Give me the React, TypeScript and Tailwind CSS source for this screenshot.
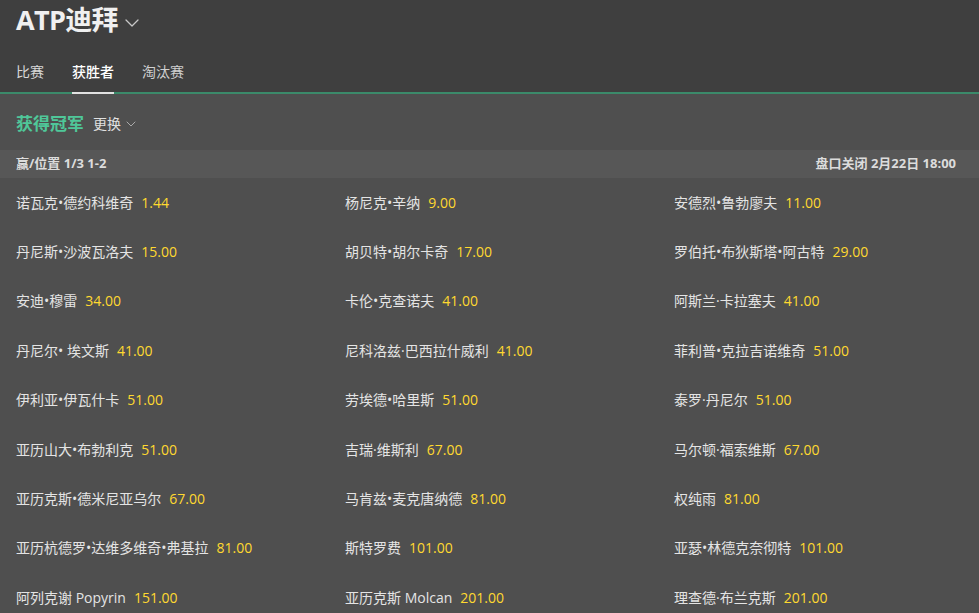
import { ChevronDown } from 'lucide-react';

const runners: [string, string][] = [
    ['诺瓦克•德约科维奇', '1.44'],
    ['杨尼克•辛纳', '9.00'],
    ['安德烈•鲁勃廖夫', '11.00'],
    ['丹尼斯•沙波瓦洛夫', '15.00'],
    ['胡贝特•胡尔卡奇', '17.00'],
    ['罗伯托•布狄斯塔•阿古特', '29.00'],
    ['安迪•穆雷', '34.00'],
    ['卡伦•克查诺夫', '41.00'],
    ['阿斯兰·卡拉塞夫', '41.00'],
    ['丹尼尔• 埃文斯', '41.00'],
    ['尼科洛兹·巴西拉什威利', '41.00'],
    ['菲利普•克拉吉诺维奇', '51.00'],
    ['伊利亚•伊瓦什卡', '51.00'],
    ['劳埃德•哈里斯', '51.00'],
    ['泰罗·丹尼尔', '51.00'],
    ['亚历山大•布勃利克', '51.00'],
    ['吉瑞·维斯利', '67.00'],
    ['马尔顿·福索维斯', '67.00'],
    ['亚历克斯•德米尼亚乌尔', '67.00'],
    ['马肯兹•麦克唐纳德', '81.00'],
    ['权纯雨', '81.00'],
    ['亚历杭德罗•达维多维奇•弗基拉', '81.00'],
    ['斯特罗费', '101.00'],
    ['亚瑟•林德克奈彻特', '101.00'],
    ['阿列克谢 Popyrin', '151.00'],
    ['亚历克斯 Molcan', '201.00'],
    ['理查德·布兰克斯', '201.00'],
];

export default function App() {
    return (
        <div
            className="min-h-screen bg-[#4f4f4f] text-[#e4e4e4]"
            style={{ fontFamily: '"Open Sans", "Noto Sans CJK SC", sans-serif' }}
        >
            <header className="bg-[#3f3f3f]">
                <div className="flex items-center h-[41px] px-4">
                    <h1 className="text-[27px] font-bold text-[#f0f0f0] tracking-tight">ATP迪拜</h1>
                    <ChevronDown className="ml-0.5 mt-1 w-6 h-6 text-[#c8c8c8]" strokeWidth={1.25} />
                </div>
                <nav className="flex px-4 pt-[21px] border-b-2 border-[#3b8a6a]">
                    <a className="mr-7 pb-[10px] text-sm text-[#d8d8d8]">比赛</a>
                    <a className="mr-7 pb-[10px] text-sm text-white -mb-[2px] border-b-2 border-[#e2e2e2] font-medium">获胜者</a>
                    <a className="pb-[10px] text-sm text-[#d0d0d0]">淘汰赛</a>
                </nav>
            </header>

            <div className="flex items-center h-[56px] pt-[4px] px-4">
                <span className="text-[17px] font-bold text-[#4fc799]">获得冠军</span>
                <span className="ml-[9px] text-sm text-[#e0e0e0]">更换</span>
                <ChevronDown className="ml-0.5 w-4 h-4 text-[#aaaaaa]" strokeWidth={1.5} />
            </div>

            <div className="flex items-center justify-between h-[28px] px-4 bg-[#575757] text-[13px] font-bold text-[#dcdcdc]">
                <span>赢/位置 1/3 1-2</span>
                <span className="pr-[7px]">盘口关闭 2月22日 18:00</span>
            </div>

            <div className="grid grid-cols-[329px_329px_1fr]">
                {runners.map(([name, odds]) => (
                    <div key={name} className="flex items-center h-[49.4px] px-4 text-sm">
                        <span className="text-[#e4e4e4]">{name}</span>
                        <span className="ml-2 text-[#ffd92f]">{odds}</span>
                    </div>
                ))}
            </div>
        </div>
    );
}
